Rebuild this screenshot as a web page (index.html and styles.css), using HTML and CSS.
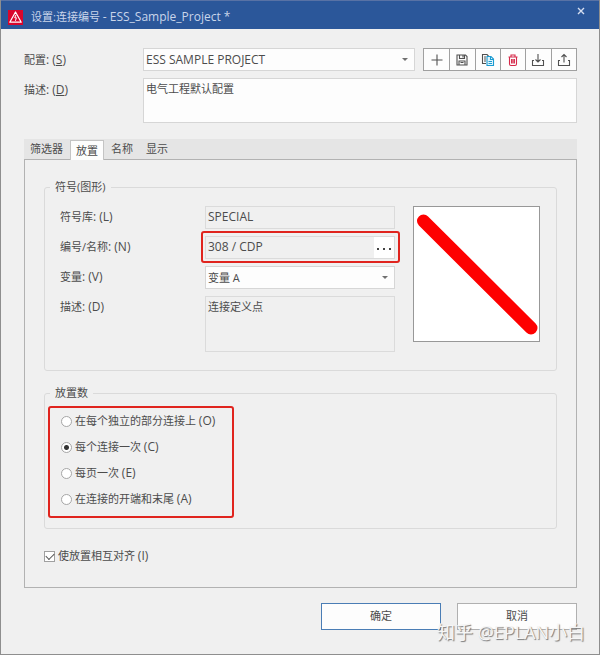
FILE: index.html
```html
<!DOCTYPE html>
<html lang="zh-CN">
<head>
<meta charset="utf-8">
<meta name="viewport" content="width=device-width, initial-scale=1">
<title>设置:连接编号</title>
<link rel="stylesheet" href="styles.css">
</head>
<body>
<main class="window">
  <header class="titlebar">
    <svg class="app-icon" viewBox="0 0 15 15" aria-hidden="true">
      <rect width="15" height="15" fill="#d9062c"/>
      <path d="M7.5 2 13.2 12.2H1.8Z" fill="none" stroke="#fff" stroke-width="1.2" stroke-linejoin="round"/>
      <path d="M8 4.8 6.7 7.8h1.7L7.4 10.8" fill="none" stroke="#fff" stroke-width="1"/>
    </svg>
    <h1 class="title">设置:连接编号 <span class="latin">- ESS_Sample_Project *</span></h1>
    <button class="close" type="button" aria-label="关闭">
      <svg viewBox="0 0 8 8"><path d="M1 1 7 7M7 1 1 7" fill="none" stroke="#d5def0" stroke-width="1.4"/></svg>
    </button>
  </header>

  <form class="content">
    <div class="row">
      <label class="label" for="config">配置<span class="latin">: (<u>S</u>)</span></label>
      <div class="select-wrap">
        <select class="field latin" id="config"><option>ESS SAMPLE PROJECT</option></select>
      </div>
      <div class="toolbar">
        <button type="button" aria-label="新建"><svg viewBox="0 0 14 14"><path d="M7 1.5v11M1.5 7h11"/></svg></button>
        <button type="button" aria-label="保存"><svg viewBox="0 0 14 14"><path d="M2 2h8.5L12 3.5V12H2ZM4.5 2v3.5h5V2M8 2.5v2M4 12V8h6v4M5.5 9.5h3"/></svg></button>
        <button type="button" aria-label="复制"><svg viewBox="0 0 14 14"><path d="M5 10.5H1.500v-9H6L7.5 3M3 4h2M3 6h2M3 8h2"/><path class="blue" d="M6 3.5h4L12.5 6v6.5H6ZM9.5 3.5V6.5h3M7.5 8.5h3.500M7.5 10.5h3.500"/></svg></button>
        <button type="button" aria-label="删除"><svg viewBox="0 0 14 14"><path class="red" d="M2.5 4h9M5 4V2h4v2M3.5 4v7q0 1.500 1.500 1.500h4q1.500 0 1.500-1.500V4M5.6 6v4.500M7 6v4.500M8.4 6v4.500"/></svg></button>
        <button type="button" aria-label="导入"><svg viewBox="0 0 14 14"><path d="M7 1v8M4.5 6.5 7 9l2.500-2.500M3 7.5H1.500v5h11v-5H11"/></svg></button>
        <button type="button" aria-label="导出"><svg viewBox="0 0 14 14"><path d="M7 9.500v-8M4.5 4 7 1.500 9.500 4M3 7.5H1.500v5h11v-5H11"/></svg></button>
      </div>
    </div>
    <div class="row row-top">
      <label class="label" for="desc">描述<span class="latin">: (<u>D</u>)</span></label>
      <textarea class="field description" id="desc">电气工程默认配置</textarea>
    </div>

    <div class="tabs" role="tablist">
      <button type="button" role="tab">筛选器</button>
      <button type="button" role="tab" aria-selected="true">放置</button>
      <button type="button" role="tab">名称</button>
      <button type="button" role="tab">显示</button>
    </div>

    <section class="panel">
      <fieldset class="group symbol">
        <legend>符号(图形)</legend>
        <div class="symbol-layout">
          <div class="symbol-fields">
            <label for="library">符号库<span class="latin">: (L)</span></label>
            <input class="field muted latin" id="library" type="text" value="SPECIAL" readonly>
            <label for="number">编号/名称<span class="latin">: (N)</span></label>
            <div class="picker marked">
              <input class="field muted latin" id="number" type="text" value="308 / CDP" readonly>
              <button class="browse" type="button" aria-label="浏览"><i></i><i></i><i></i></button>
            </div>
            <label for="variant">变量<span class="latin">: (V)</span></label>
            <div class="select-wrap">
              <select class="field" id="variant"><option>变量 A</option></select>
            </div>
            <label for="symdesc">描述<span class="latin">: (D)</span></label>
            <textarea class="field muted symbol-desc" id="symdesc" readonly>连接定义点</textarea>
          </div>
          <svg class="preview" viewBox="0 0 125 133" role="img" aria-label="符号预览">
            <path d="M9.5 13.5 117 120.5" stroke="#fe0000" stroke-width="13" stroke-linecap="round"/>
          </svg>
        </div>
      </fieldset>

      <fieldset class="group count">
        <legend>放置数</legend>
        <div class="options marked">
          <label><input type="radio" name="count"><span>在每个独立的部分连接上 <span class="latin">(O)</span></span></label>
          <label><input type="radio" name="count" checked><span>每个连接一次 <span class="latin">(C)</span></span></label>
          <label><input type="radio" name="count"><span>每页一次 <span class="latin">(E)</span></span></label>
          <label><input type="radio" name="count"><span>在连接的开端和末尾 <span class="latin">(A)</span></span></label>
        </div>
      </fieldset>

      <label class="align"><input type="checkbox" checked><span>使放置相互对齐 <span class="latin">(I)</span></span></label>
    </section>

    <footer class="actions">
      <button class="primary" type="button">确定</button>
      <button type="button">取消</button>
    </footer>
  </form>
  <span class="watermark">知乎 @EPLAN小白</span>
</main>
</body>
</html>
```

FILE: styles.css
```css
* { box-sizing: border-box; }

body {
  margin: 0;
  background: #f0f0f0;
  color: #4c4c4c;
  font: 11px/16px "Open Sans", "Noto Sans CJK SC", sans-serif;
}

button, input, select, textarea {
  margin: 0;
  color: inherit;
  font: inherit;
}

.latin { font-size: 12px; }

.window {
  position: relative;
  min-height: 100vh;
  border: 1px solid #8e8e8e;
  border-top: 0;
}

.titlebar {
  display: flex;
  align-items: center;
  height: 29px;
  padding: 4px 12px 0 7px;
  border-top: 1px solid #5872a5;
  background: #2b579a;
  color: #c9d5ea;
}

.app-icon { width: 15px; height: 15px; }

.title {
  flex: 1;
  margin: 0 0 0 8px;
  font-size: 11px;
  font-weight: 400;
}

.close {
  align-self: flex-start;
  display: flex;
  padding: 2px;
  border: 0;
  background: none;
}

.close svg { width: 8px; height: 8px; }

.content { padding: 19px 22px 24px 23px; }

.row {
  display: flex;
  align-items: center;
  margin-bottom: 7px;
}

.row-top { align-items: flex-start; margin-bottom: 16px; }
.row-top .label { padding-top: 4px; }
.label { flex: 0 0 119px; }

.field {
  display: block;
  width: 100%;
  height: 23px;
  padding: 0 2px;
  border: 1px solid #d6d6d6;
  border-radius: 0;
  background: #fdfdfd;
  outline: 0;
  appearance: none;
  resize: none;
}

input.field { padding-bottom: 2px; }
textarea.field { padding-top: 2px; }
.field.muted { background: #f0f0f0; border-color: #dbdbdb; }

.description { flex: 1; height: 45px; }

.select-wrap { position: relative; flex: 1; }

.select-wrap::after {
  content: "";
  position: absolute;
  top: 10px;
  right: 7px;
  border: 3px solid transparent;
  border-top-color: #707070;
  border-bottom: 0;
  pointer-events: none;
}

.toolbar {
  display: grid;
  grid-template-columns: repeat(6, 1fr);
  width: 154px;
  height: 23px;
  margin-left: 8px;
  border: 1px solid #a0a0a0;
  background: #fdfdfd;
}

.toolbar button {
  display: grid;
  place-items: center;
  padding: 0;
  border: 0;
  background: none;
}

.toolbar button + button { border-left: 1px solid #a0a0a0; }

.toolbar svg {
  width: 14px;
  height: 14px;
  fill: none;
  stroke: #505050;
  stroke-width: 1.1;
}

.toolbar .blue { stroke: #1b9bd1; fill: #e4f5fc; }
.toolbar .red { stroke: #d62849; }

.tabs {
  display: flex;
  align-items: flex-end;
  gap: 1px;
  height: 20px;
  background: #e5e5e5;
}

.tabs button {
  height: 20px;
  padding: 0 6px;
  border: 0;
  background: none;
}

.tabs [aria-selected="true"] {
  position: relative;
  z-index: 1;
  margin-bottom: -1px;
  padding: 0 5px;
  border: 1px solid #c4c4c4;
  border-bottom: 0;
  background: #fdfdfd;
}

.panel {
  padding: 19px 19px 23px;
  border: 1px solid #b2b2b2;
}

.group {
  min-width: 0;
  margin: 0;
  border: 1px solid #dadada;
  border-radius: 3px;
}

.group legend { margin-left: 5px; padding: 0 5px; }

.symbol { padding: 11px 16px 18px 0; }
.symbol legend, .count legend { height: 16px; }

.symbol-layout {
  display: flex;
  align-items: flex-start;
  gap: 18px;
  padding-left: 15px;
}

.symbol-fields {
  flex: 1;
  display: grid;
  grid-template-columns: 145px 1fr;
  gap: 7px 0;
}

.symbol-fields label { padding-top: 3px; }
.symbol-desc { height: 56px; }

.preview {
  flex: 0 0 127px;
  height: 136px;
  border: 1px solid #989898;
  background: #fff;
}

.picker { position: relative; }

.browse {
  position: absolute;
  top: 1px;
  right: 1px;
  display: flex;
  align-items: center;
  justify-content: center;
  gap: 4px;
  width: 20px;
  height: 21px;
  padding: 3px 0 0;
  border: 0;
  background: #fff;
}

.browse i { width: 2px; height: 2px; background: #444; }

.marked::after {
  content: "";
  position: absolute;
  border: 2px solid #e0241e;
  border-radius: 3px;
  pointer-events: none;
}

.picker.marked::after { inset: -5px -5px -4px -4px; }

.count { margin-top: 14px; padding: 7px 0 16px; }

.options {
  position: relative;
  display: flex;
  flex-direction: column;
  align-items: flex-start;
  width: max-content;
  padding-left: 16px;
}

.options.marked::after { inset: -2px -19px -6px 3px; }

.options label, .align {
  display: flex;
  align-items: center;
}

.options label { height: 26px; }

.options input {
  width: 11px;
  height: 11px;
  margin-right: 3px;
  border: 1px solid #a6a6a6;
  border-radius: 50%;
  background: #fff;
  appearance: none;
}

.options input:checked {
  background: radial-gradient(circle, #333 0 2px, #fff 3px);
}

.align { width: max-content; margin-top: 19px; }

.align input {
  display: grid;
  place-items: center;
  width: 11px;
  height: 11px;
  margin-right: 3px;
  border: 1px solid #a0a0a0;
  background: #fff;
  appearance: none;
}

.align input::after {
  content: "";
  width: 7px;
  height: 4px;
  margin-bottom: 2px;
  border: solid #555;
  border-width: 0 0 1px 1px;
  transform: rotate(-45deg);
}

.actions {
  display: flex;
  justify-content: flex-end;
  gap: 16px;
  margin-top: 15px;
}

.actions button {
  width: 120px;
  height: 27px;
  padding: 0 0 2px;
  border: 1px solid #b0b0b0;
  background: #fdfdfd;
}

.actions .primary { border-color: #4a7db5; }

.watermark {
  position: absolute;
  right: 14px;
  bottom: 13px;
  color: #f6f6f6;
  font-size: 18px;
  line-height: 18px;
  text-shadow: 1px 1px 1px #777;
  pointer-events: none;
}
```
